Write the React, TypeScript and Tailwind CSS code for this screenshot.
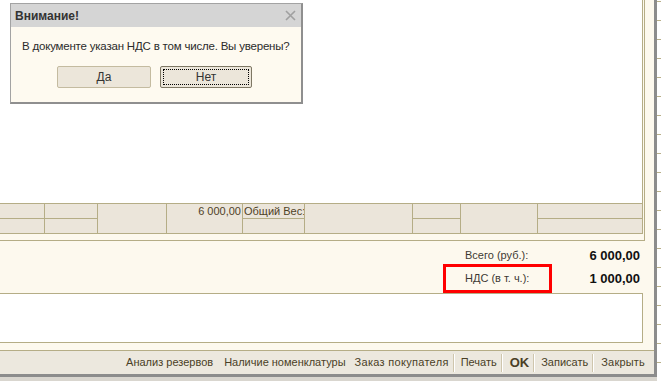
import React from "react";

const TAN = "border-[#b5ad86]";

function Sep() {
  return (
    <div className="flex h-[18px] mx-[4px]">
      <div className="w-px bg-[#cfc6ad]" />
      <div className="w-px bg-white" />
    </div>
  );
}

function FooterCell({ w, split, top, align }: { w: string; split?: boolean; top?: string; align?: string }) {
  return (
    <div className={`${w} h-full flex flex-col border-r ${TAN}`}>
      <div className={`h-[15px] flex items-center ${align === "right" ? "justify-end pr-px" : "pl-px"} ${split ? `border-b ${TAN}` : ""} text-[11px] text-[#4f4227] leading-none whitespace-nowrap overflow-hidden`}>
        {top}
      </div>
      <div className="flex-1" />
    </div>
  );
}

export default function App() {
  const ticks = Array.from({ length: 20 });
  return (
    <div className="w-[661px] h-[381px] flex bg-white overflow-hidden font-['Liberation_Sans',Arial,sans-serif] relative">
      {/* window */}
      <div className="w-[657px] h-full flex flex-col">
        <div className="flex-1 flex flex-col bg-[#fdf9ee] border-r-[3px] border-b-[3px] border-[#8c8c8c] min-h-0">
          {/* top table frame */}
          <div className={`w-[645px] h-[241px] border-r border-b ${TAN} flex flex-col`}>
            <div className={`w-[643px] h-[234px] border-r ${TAN} flex flex-col bg-white`}>
              <div className="h-[203px]" />
              <div className={`h-[31px] flex border-t border-b ${TAN} bg-[#ebe5da]`}>
                <FooterCell w="w-[45px]" split />
                <FooterCell w="w-[53px]" split />
                <FooterCell w="w-[69px]" />
                <FooterCell w="w-[76px]" top="6 000,00" align="right" />
                <FooterCell w="w-[62px]" split top="Общий Вес:" />
                <FooterCell w="w-[108px]" />
                <FooterCell w="w-[48px]" split />
                <FooterCell w="w-[77px]" />
                <div className="flex-1 flex flex-col">
                  <div className={`h-[15px] border-b ${TAN}`} />
                </div>
              </div>
            </div>
          </div>
          {/* totals */}
          <div className="h-[52px] w-[643px] flex flex-col text-[11px] relative">
            <div className="h-[3px]" />
            <div className="h-[23px] flex items-center">
              <span className="ml-[465px] text-[#3d3a33]">Всего (руб.):</span>
              <span className="ml-auto mr-[3px] font-bold text-[13px] text-[#111]">6 000,00</span>
            </div>
            <div className="h-[23px] flex items-center">
              <span className="ml-[465px] text-[#3d3a33]">НДС (в т. ч.):</span>
              <span className="ml-auto mr-[3px] font-bold text-[13px] text-[#111]">1 000,00</span>
            </div>
            <div className="absolute left-[443px] top-[23px] w-[109px] h-[29px] border-[3px] border-[#ff0000]" />
          </div>
          {/* comment box */}
          <div className={`w-[643px] h-[50px] bg-white border ${TAN} border-l-0`} />
          <div className="h-[7px]" />
          {/* toolbar */}
          <div className={`flex-1 border-t ${TAN} bg-[#ece8de] flex items-center justify-end pr-[9px] text-[11px] text-[#4a3f26] whitespace-nowrap`}>
            <span className="mr-[11px]">Анализ резервов</span>
            <span className="mr-[9px]">Наличие номенклатуры</span>
            <span className="tracking-[0.3px]">Заказ покупателя</span>
            <Sep />
            <span className="ml-[2px]">Печать</span>
            <Sep />
            <span className="font-bold text-[13px] ml-[3px]">OK</span>
            <Sep />
            <span className="ml-[2px]">Записать</span>
            <Sep />
            <span className="ml-[3px] tracking-[0.2px]">Закрыть</span>
          </div>
        </div>
        <div className="h-[4px] bg-[#d9d6cf]" />
      </div>
      {/* background sheet ticks */}
      <div className="w-[4px] flex flex-col">
        <div className="h-[12px]" />
        {ticks.map((_, i) => (
          <div key={i} className="h-[19px] shrink-0 border-t border-[#b9b08a]" />
        ))}
      </div>

      {/* dialog */}
      <div className="absolute left-[10px] top-[3px] w-[293px] h-[101px] flex flex-col border border-[#a3a3a3] border-r-[2px] border-b-[2px] border-r-[#8f8f8f] border-b-[#8f8f8f] bg-[#fefaf0]">
        <div className="h-[23px] bg-[#d5d5d5] flex items-center justify-between pl-[4px] pr-[5px]">
          <span className="text-[12px] font-bold text-[#333]">Внимание!</span>
          <svg width="11" height="11" viewBox="0 0 11 11">
            <path d="M1 1 L10 10 M10 1 L1 10" stroke="#a0a0a0" strokeWidth="1.6" />
          </svg>
        </div>
        <div className="flex-1 flex flex-col items-start">
          <div className="mt-[12px] ml-[11px] text-[11.5px] tracking-[-0.2px] text-[#2b2b2b] leading-[14px] whitespace-nowrap">
            В документе указан НДС в том числе. Вы уверены?
          </div>
          <div className="mt-[13px] ml-[46px] flex gap-[9px]">
            <div className="w-[94px] h-[22px] border border-[#c4bba0] bg-[#ece6da] rounded-[2px] flex items-center justify-center text-[12px] text-[#333]">
              Да
            </div>
            <div className="w-[92px] h-[22px] border border-[#7e7764] bg-[#ece6da] rounded-[2px] p-[2px]">
              <div className="w-full h-full border border-dotted border-black flex items-center justify-center text-[12px] text-[#333]">
                Нет
              </div>
            </div>
          </div>
        </div>
      </div>
    </div>
  );
}
